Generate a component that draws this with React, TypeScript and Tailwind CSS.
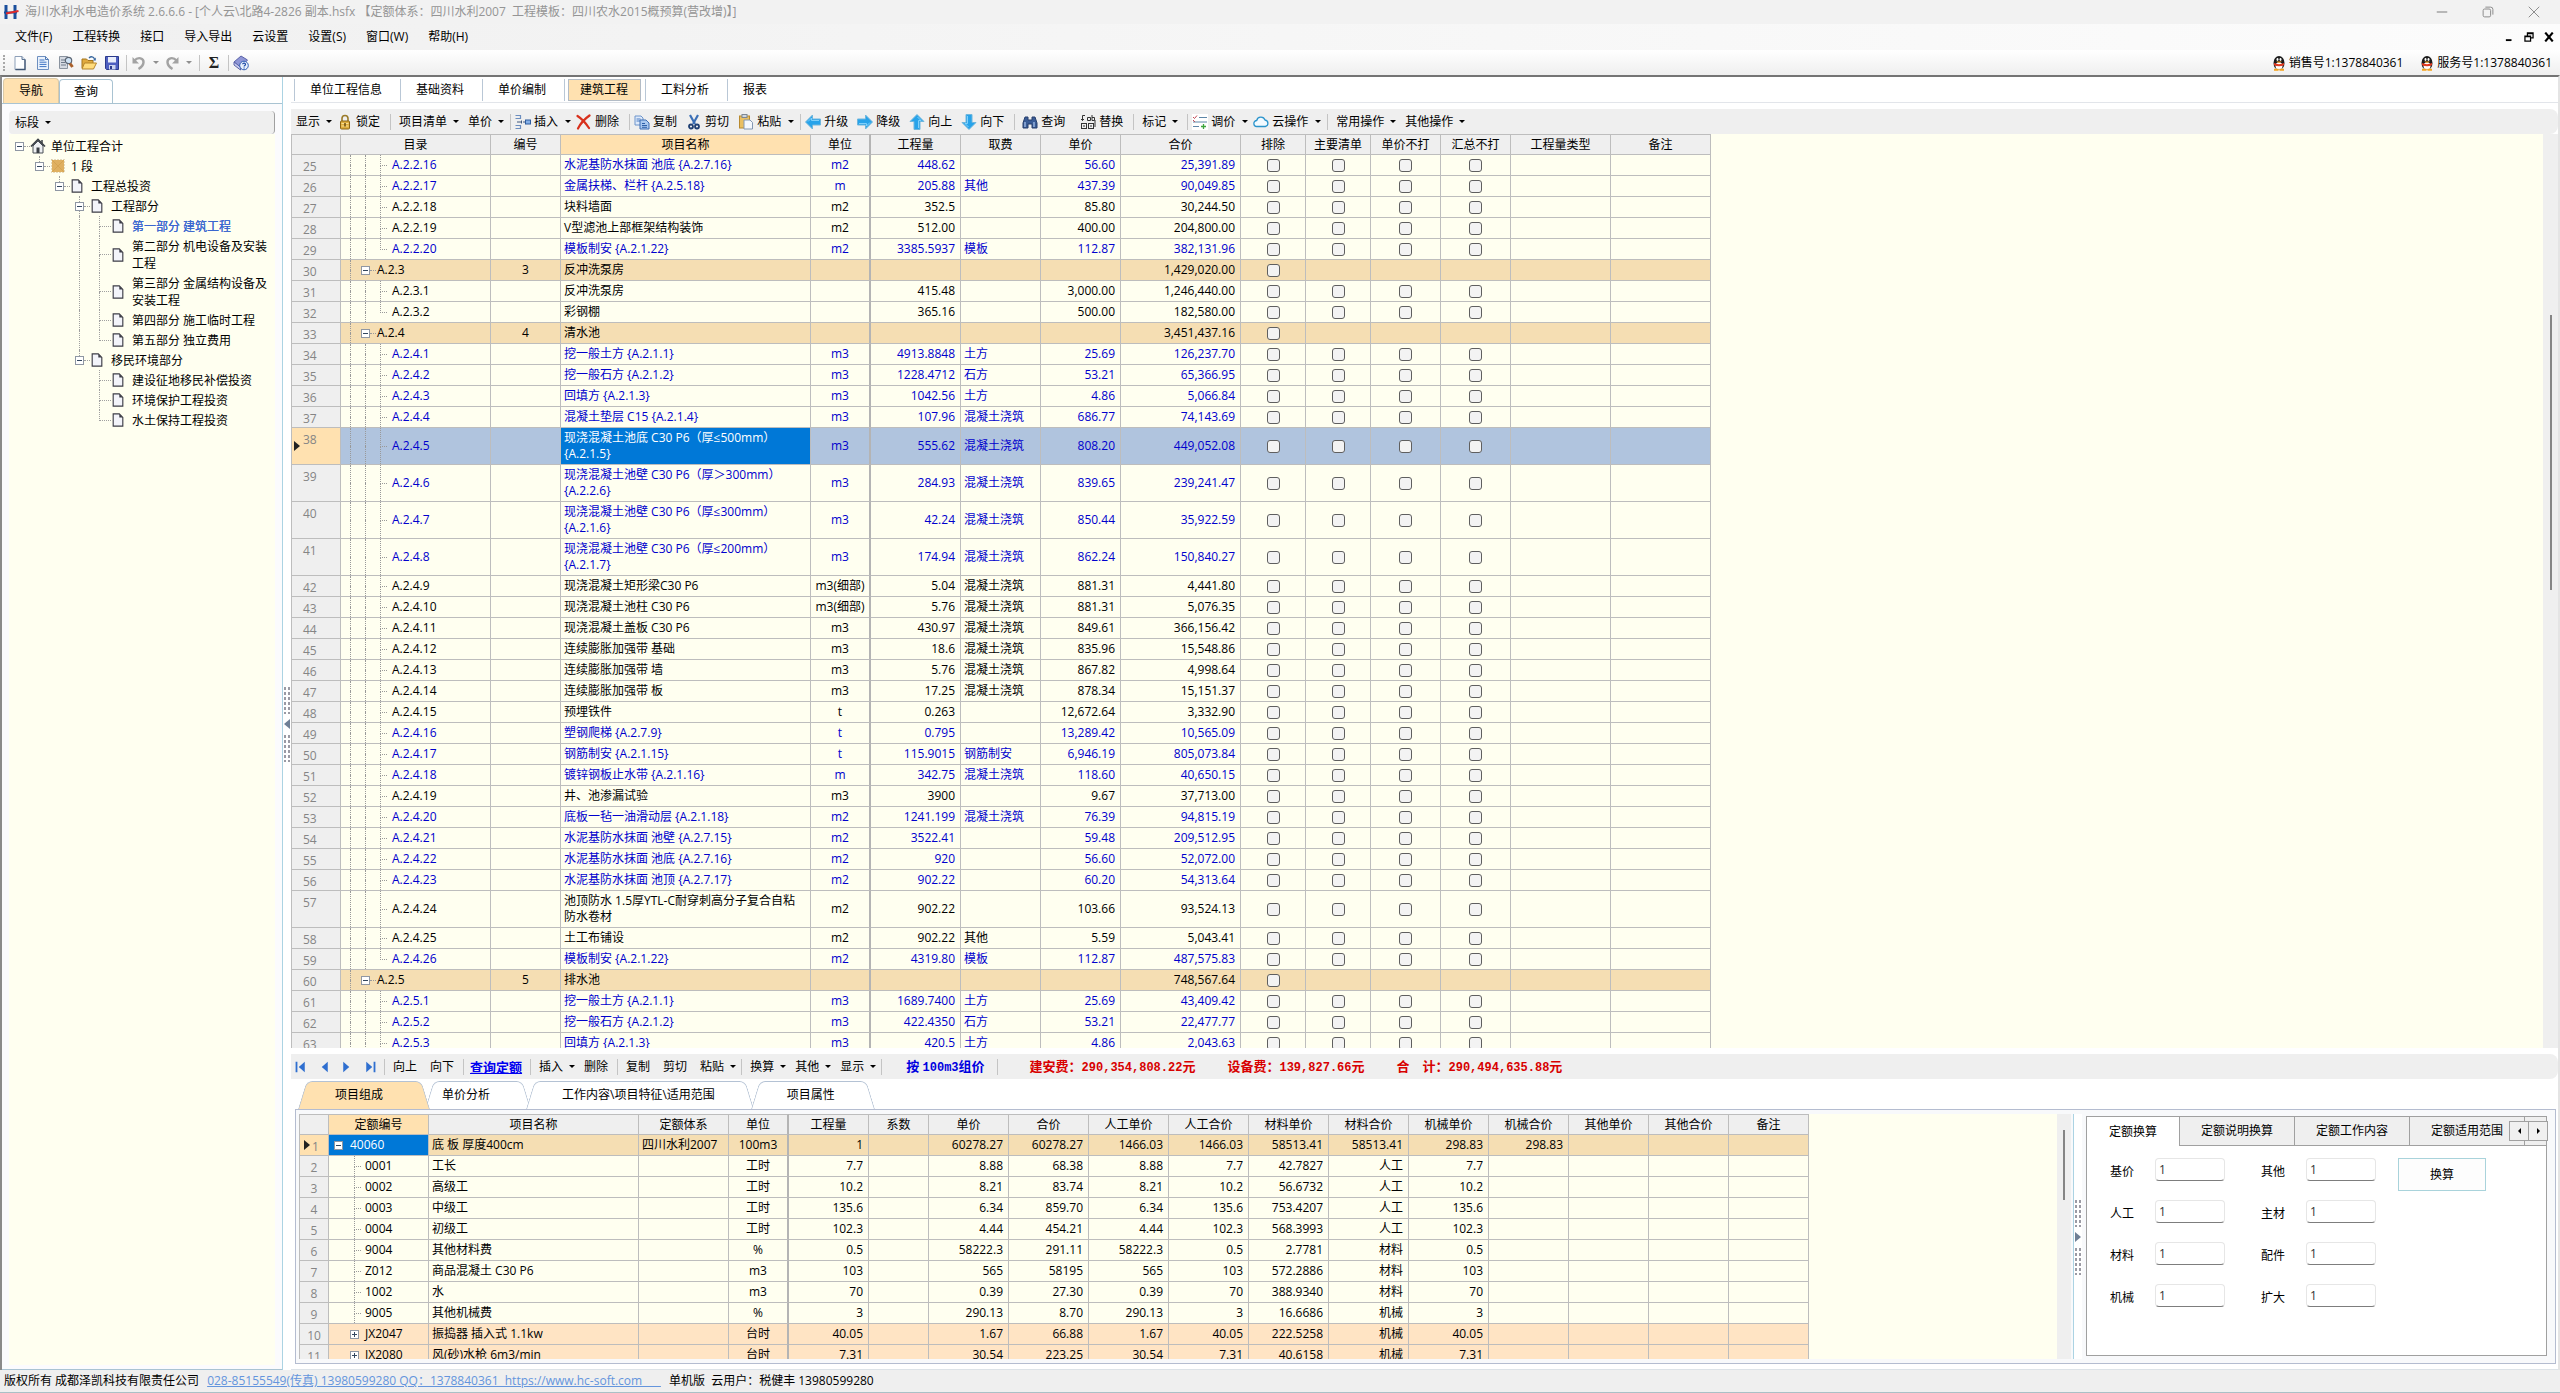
import React from "react";

const FONT = "font-['Open_Sans','Noto_Sans_CJK_SC',sans-serif]";

/* ---------- icons ---------- */

const Svg = ({ children, size = "size-4" }: { children: React.ReactNode; size?: string }) => (
  <svg viewBox="0 0 16 16" className={`${size} shrink-0`} fill="none" aria-hidden="true">
    {children}
  </svg>
);

const NewDoc = () => (
  <Svg>
    <path d="M3 1.5h7l3 3v10H3z" fill="#fdfeff" stroke="#8d9fb8" />
    <path d="M13 4.5v10H3.5" stroke="#3f5573" strokeWidth="1.3" />
    <path d="M10 1.5v3h3" fill="#dbe6f3" stroke="#5d7391" />
  </Svg>
);
const TextDoc = () => (
  <Svg>
    <path d="M2.5 1.5h8l3 3v10h-11z" fill="#eaf2fc" stroke="#6d8fc0" />
    <path d="M10.5 1.5v3h3" stroke="#4f78b3" />
    <path d="M4.5 5h5M4.5 7.2h7M4.5 9.4h7M4.5 11.6h7" stroke="#3f74c4" />
  </Svg>
);
const FindDoc = () => (
  <Svg>
    <path d="M1.5 1.5h8v12h-8z" fill="#d5dae2" stroke="#8a939f" />
    <path d="M3 5h4M3 7.5h4M3 10h5" stroke="#6e7a8a" />
    <circle cx="10.5" cy="5.5" r="3.2" fill="#cfe3f5" stroke="#5a6472" strokeWidth="1.2" />
    <path d="M12 8.5l2.5 3.5" stroke="#a9602b" strokeWidth="3" />
  </Svg>
);
const OpenFolder = () => (
  <Svg>
    <path d="M1 4h4.5l1.5 1.5h5V13H1z" fill="#e0aa3e" stroke="#a4741c" />
    <path d="M3.5 8h12L12.5 14H1z" fill="#ffdc7c" stroke="#b5852b" />
    <path d="M8 3c2-2 4.5-1.5 5.5 1" stroke="#38679f" strokeWidth="1.3" />
    <path d="M14.8 2.5v3h-3z" fill="#38679f" />
  </Svg>
);
const Save = () => (
  <Svg>
    <path d="M1.5 1.5h13v13h-12l-1-1z" fill="#4e5fc0" stroke="#2b3a8c" />
    <path d="M4 2h8v5.5H4z" fill="#e9eefb" />
    <path d="M5 10h6.5v4.5H5z" fill="#cdd5ee" />
    <path d="M6 11h2v3H6z" fill="#2b3a8c" />
  </Svg>
);
const Undo = () => (
  <Svg>
    <path d="M3.5 5.5C7 1.5 13 3 12.5 7.5c-.3 3-2.5 5-5 6.5" stroke="#a3a3a3" strokeWidth="2.4" />
    <path d="M1.5 2v6.5H8z" fill="#a3a3a3" />
  </Svg>
);
const Redo = () => (
  <Svg>
    <path d="M12.5 5.5C9 1.5 3 3 3.5 7.5c.3 3 2.5 5 5 6.5" stroke="#a3a3a3" strokeWidth="2.4" />
    <path d="M14.5 2v6.5H8z" fill="#a3a3a3" />
  </Svg>
);
const HelpBook = () => (
  <Svg>
    <path d="M1 7l7-6 6.5 4-7 7z" fill="#8f96d6" stroke="#5a62a8" />
    <path d="M1 7v3l6.5 5v-3z" fill="#c8ccee" stroke="#5a62a8" />
    <circle cx="11" cy="10.5" r="4.3" fill="#e6effc" stroke="#2f5db5" />
    <path d="M9.6 9.3c.2-1.600 2.900-1.600 2.900.1 0 1-1.400 1.200-1.400 2.200M11.100 12.400v1" stroke="#1f4ba8" strokeWidth="1.2" />
  </Svg>
);
const Lock = () => (
  <Svg>
    <path d="M5 8V4.5a3 3 0 0 1 6 0V8" stroke="#9a7b2a" strokeWidth="1.6" />
    <rect x="3.5" y="7" width="9" height="8" rx="1" fill="#dfae3f" stroke="#8a6414" />
    <path d="M4.5 9.5h7M4.5 12h7" stroke="#f8df94" />
    <path d="M8 9v3.5" stroke="#6b4a0b" strokeWidth="1.5" />
  </Svg>
);
const Insert = () => (
  <Svg>
    <path d="M.5 1.5h5v3h-5M.5 14.5h5v-3h-5" stroke="#6c8ebf" strokeWidth="1.2" />
    <path d="M2 8h4M8 8h2M6.5 6.5v3" stroke="#41597d" />
    <rect x="10.5" y="6" width="5" height="4" fill="#86b0e8" stroke="#2e5c9e" />
  </Svg>
);
const Cross = () => (
  <Svg>
    <path d="M1.5 2c4 2.5 8.5 7.5 11.5 12M13.5 1.5C8.5 5 4.5 9.5 2 14.5" stroke="#d8301c" strokeWidth="2.2" strokeLinecap="round" />
  </Svg>
);
const Copy = () => (
  <Svg>
    <path d="M1 2h6l2 2v7H1z" fill="#dfeafa" stroke="#6d94cb" />
    <path d="M2.5 5h4M2.5 7h4" stroke="#4a7dc4" />
    <path d="M6 6h6l3 3v6H6z" fill="#a9c8ef" stroke="#3d6db3" />
    <path d="M8 9.5h3M8 11.5h5M8 13.3h5" stroke="#2e5fa8" />
  </Svg>
);
const Cut = () => (
  <Svg>
    <path d="M4 1l5 9M12 1L7 10" stroke="#3b6fb6" strokeWidth="2.2" />
    <circle cx="5" cy="12.5" r="2" stroke="#1f3f73" strokeWidth="1.8" />
    <circle cx="11" cy="12.5" r="2" stroke="#1f3f73" strokeWidth="1.8" />
  </Svg>
);
const Paste = () => (
  <Svg>
    <rect x="1.5" y="2" width="10" height="12" fill="#e9bf62" stroke="#b98a2f" />
    <rect x="4" y=".5" width="5" height="3" fill="#cfd6df" stroke="#7d8793" />
    <path d="M6 6h6l2.5 2.500V15H6z" fill="#f4f8fd" stroke="#8297b3" />
  </Svg>
);
const Arrow = ({ turn }: { turn: string }) => (
  <svg viewBox="0 0 16 16" className={`size-4 shrink-0 ${turn}`} aria-hidden="true">
    <path d="M.5 8l7-7v4H15.500v6H7.500v4z" fill="#27a3ea" stroke="#6fb6dd" />
    <path d="M3 7.500L6.500 4v2.500H14" stroke="#7fd0fb" fill="none" />
  </svg>
);
const Binoculars = () => (
  <Svg>
    <path d="M3 3h3v3h4V3h3l2 6v5h-5v-4H6v4H1V9z" fill="#3a5c96" stroke="#263f6d" />
    <path d="M3 8v5M12 8v5" stroke="#a5c1ea" strokeWidth="1.3" />
  </Svg>
);
const Replace = () => (
  <Svg>
    <path d="M5 1.5H2.500v5M2.500 6.500L1 5M2.500 6.500L4 5" stroke="#333" />
    <path d="M10.500 6.500v-3h-3v3zM12 1v5.500h2.500v-3H12" stroke="#333" />
    <rect x="1.5" y="9.5" width="5" height="5" stroke="#333" />
    <rect x="8.5" y="9.5" width="5" height="5" stroke="#333" />
    <path d="M3 12h2M10 12h2M15 6v7" stroke="#333" />
  </Svg>
);
const PriceAdjust = () => (
  <Svg>
    <rect width="16" height="16" fill="#fff" />
    <path d="M1 3l1.500 1.500L5 1.500" stroke="#c24a56" />
    <path d="M7 3.500h8M1 8h14M1 12.500h6" stroke="#5d86a8" />
    <path d="M1 6l2 2" stroke="#c24a56" />
    <path d="M9 12.500h5M11.500 10v5" stroke="#3da53d" strokeWidth="1.3" />
  </Svg>
);
const Cloud = () => (
  <Svg>
    <path d="M4 12.500a3 3 0 0 1-.3-6A4.300 4.300 0 0 1 12 6a3.300 3.300 0 0 1 .3 6.500z" fill="#f2faff" stroke="#2b94cc" strokeWidth="1.3" />
  </Svg>
);
const Penguin = () => (
  <Svg>
    <ellipse cx="8" cy="8" rx="5.500" ry="7" fill="#1b1b1b" />
    <ellipse cx="8" cy="11" rx="3.500" ry="3.700" fill="#fff" />
    <ellipse cx="6.500" cy="4.500" rx="1" ry="1.400" fill="#fff" />
    <ellipse cx="9.500" cy="4.500" rx="1" ry="1.400" fill="#fff" />
    <path d="M5 6.500h6L8 8z" fill="#f5a31b" />
    <path d="M3 8c3 1.500 7 1.500 10 0v2.200c-3 1.300-7 1.300-10 0z" fill="#e2391f" />
    <path d="M3 14.800h4.500M8.500 14.800H13" stroke="#f5a31b" strokeWidth="2" />
  </Svg>
);
const House = () => (
  <Svg>
    <path d="M1 8.500L8 1.500l7 7" stroke="#3a3f45" strokeWidth="1.7" />
    <path d="M3 8l5-5 5 5v7H3z" fill="#eef0f3" stroke="#4a5057" />
    <rect x="6.5" y="9.5" width="3" height="5.500" fill="#3a3f45" />
    <path d="M12 2v3" stroke="#3a3f45" strokeWidth="1.5" />
  </Svg>
);
const Segment = () => (
  <Svg>
    <rect x="2" y="2" width="12" height="12" fill="#dfb061" />
    <path d="M2 2l12 12M14 2L2 14" stroke="#cf9c48" strokeWidth=".6" />
    <rect x="1.5" y="1.5" width="13" height="13" stroke="#cbb58b" strokeDasharray="1 2" />
  </Svg>
);
const Page = () => (
  <Svg size="size-3.5">
    <path d="M2.500 1h7l4 4v10h-11z" fill="#f3f4fa" stroke="#3c3c46" strokeWidth="1.3" />
    <path d="M9.500 1l4 4h-4z" fill="#3c3c46" />
  </Svg>
);
const Logo = () => (
  <Svg>
    <path d="M3 1v14M12 1v14" stroke="#1a4f9c" strokeWidth="3" />
    <path d="M1 8.500h13" stroke="#1a4f9c" strokeWidth="2" />
    <path d="M3 9.500L15.500 7" stroke="#e02a2a" strokeWidth="1.8" />
  </Svg>
);
const NavGlyph = ({ dir, bar }: { dir: "l" | "r"; bar?: boolean }) => (
  <Svg size="size-3">
    {dir === "l" ? (
      <>
        {bar && <path d="M2 1v14" stroke="#2f6fd0" strokeWidth="2.4" />}
        <path d="M13 1v14L5 8z" fill="#2f6fd0" />
      </>
    ) : (
      <>
        {bar && <path d="M14 1v14" stroke="#2f6fd0" strokeWidth="2.4" />}
        <path d="M3 1v14l8-7z" fill="#2f6fd0" />
      </>
    )}
  </Svg>
);

const Caret = ({ tone = "border-t-black" }: { tone?: string }) => (
  <span className={`mr-px h-0 w-0 border-x-[3px] border-t-[3px] border-x-transparent ${tone}`} />
);
const Sep = ({ gap = "ml-1" }: { gap?: string }) => <span className={`${gap} h-4 w-px shrink-0 bg-[#c4c4c4]`} />;

function Tool({
  icon,
  label,
  caret,
  className = "",
}: {
  icon?: React.ReactNode;
  label: string;
  caret?: boolean;
  className?: string;
}) {
  return (
    <button className={`flex items-center whitespace-nowrap ${icon ? "gap-[3px] pl-1" : "pl-2"} ${caret ? "pr-0" : "pr-[5px]"} ${className}`}>
      {icon}
      <span>{label}</span>
      {caret && (
        <span className={icon ? "flex pl-1" : "flex pl-1.5"}>
          <Caret />
        </span>
      )}
    </button>
  );
}

const Box = ({ plus }: { plus?: boolean }) => (
  <span className="flex size-[9px] shrink-0 items-center justify-center border border-[#8f97a3] bg-white">
    <svg viewBox="0 0 7 7" className="size-[7px]" aria-hidden="true">
      <path d={plus ? "M1 3.500h5M3.500 1v5" : "M1 3.500h5"} stroke="#33475f" />
    </svg>
  </span>
);

/* ---------- window chrome ---------- */

function TitleBar() {
  return (
    <header className="flex h-6 items-center bg-[#f2f2f2] pl-[3px] text-[#959595]">
      <Logo />
      <h1 className="ml-1.5 flex-1 whitespace-pre">
        {"海川水利水电造价系统 2.6.6.6 - [个人云\\北路4-2826 副本.hsfx 【定额体系：四川水利2007  工程模板：四川农水2015概预算(营改增)】]"}
      </h1>
      <div className="flex items-center gap-[34px] pr-5">
        <button aria-label="最小化"><Svg size="size-3"><path d="M1 8h14" stroke="#8a8a8a" strokeWidth="1.5" /></Svg></button>
        <button aria-label="还原"><Svg size="size-3"><rect x="1.5" y="4" width="10" height="10.5" rx="2" stroke="#8a8a8a" strokeWidth="1.3" /><path d="M4.500 1.500h7a3 3 0 0 1 3 3v7" stroke="#8a8a8a" strokeWidth="1.3" /></Svg></button>
        <button aria-label="关闭"><Svg size="size-3"><path d="M1 1l14 14M15 1L1 15" stroke="#8a8a8a" strokeWidth="1.3" /></Svg></button>
      </div>
    </header>
  );
}

function MenuBar() {
  const items = ["文件(F)", "工程转换", "接口", "导入导出", "云设置", "设置(S)", "窗口(W)", "帮助(H)"];
  return (
    <nav className="flex h-[26px] items-center gap-5 bg-linear-to-r from-[#f0f0f0] to-[#fcfcfc] pl-[15px]">
      {items.map((t) => <button key={t} className="whitespace-nowrap">{t}</button>)}
      <div className="ml-auto flex items-center gap-[10px] pr-1.5">
        <button aria-label="最小化文档"><Svg size="size-2.5"><path d="M3 13h9" stroke="#000" strokeWidth="3" /></Svg></button>
        <button aria-label="还原文档"><Svg size="size-2.5"><path d="M1.500 6.500h9v8h-9zM1.500 7.500h9M5.500 6V1.500h9v8H11M5.500 2.500h9" stroke="#000" strokeWidth="2" /></Svg></button>
        <button aria-label="关闭文档"><Svg size="size-2.5"><path d="M2 1l12 14M14 1L2 15" stroke="#000" strokeWidth="3.5" /></Svg></button>
      </div>
    </nav>
  );
}

function QuickBar() {
  return (
    <div className="flex h-[25px] items-center bg-linear-to-b from-white to-[#efefef] pl-[3px]">
      <span className="h-4 border-l-2 border-dotted border-[#a8a8a8]" />
      <div className="ml-[7px] flex items-center gap-[7px]">
        <button aria-label="新建"><NewDoc /></button>
        <button aria-label="文档"><TextDoc /></button>
        <button aria-label="查找"><FindDoc /></button>
        <button aria-label="打开"><OpenFolder /></button>
        <button aria-label="保存"><Save /></button>
      </div>
      <Sep gap="ml-1.5" />
      <button aria-label="撤销" className="ml-1 flex items-center gap-[6px]"><Undo /><Caret tone="border-t-[#8f8f8f]" /></button>
      <button aria-label="重做" className="ml-1 flex items-center gap-[6px]"><Redo /><Caret tone="border-t-[#8f8f8f]" /></button>
      <Sep gap="ml-1.5" />
      <button aria-label="合计" className="mx-1 w-5 font-['Liberation_Serif',serif] text-base leading-5 font-bold text-[#222]">Σ</button>
      <Sep gap="ml-0" />
      <button aria-label="帮助" className="ml-1"><HelpBook /></button>
      <div className="ml-auto flex items-center gap-4 pr-2">
        {["销售号1:1378840361", "服务号1:1378840361"].map((t) => (
          <button key={t} className="flex items-center gap-0.5"><Penguin />{t}</button>
        ))}
      </div>
    </div>
  );
}

/* ---------- navigation tree ---------- */

type Node = { level: number; text: string[]; open?: boolean; last?: boolean; on?: boolean };
const nodes: Node[] = [
  { level: 0, text: ["单位工程合计"], open: true, last: true },
  { level: 1, text: ["1 段"], open: true, last: true },
  { level: 2, text: ["工程总投资"], open: true, last: true },
  { level: 3, text: ["工程部分"], open: true },
  { level: 4, text: ["第一部分 建筑工程"], on: true },
  { level: 4, text: ["第二部分 机电设备及安装", "工程"] },
  { level: 4, text: ["第三部分 金属结构设备及", "安装工程"] },
  { level: 4, text: ["第四部分 施工临时工程"] },
  { level: 4, text: ["第五部分 独立费用"], last: true },
  { level: 3, text: ["移民环境部分"], open: true, last: true },
  { level: 4, text: ["建设征地移民补偿投资"] },
  { level: 4, text: ["环境保护工程投资"] },
  { level: 4, text: ["水土保持工程投资"], last: true },
];

const dotsV = "border-l border-dotted border-[#a0a0a0]";

function Sidebar() {
  return (
    <aside className="flex w-[280px] shrink-0 flex-col">
      <div className="flex h-[27px] items-end border-b border-[#a9c3d2] pl-px">
        <button className="h-[25px] w-14 rounded-t border border-b-0 border-[#d9c9a8] bg-[#ffe1b0]">导航</button>
        <button className="h-6 w-[54px] rounded-t border border-b-0 border-[#a9c3d2] bg-white">查询</button>
      </div>
      <div className="flex flex-1 flex-col border-b border-[#a9c3d2] bg-[#fbfbfd] px-[7px] pt-[7px] pb-1">
        <div className="flex h-[23px] items-center rounded-sm border-r border-[#a0a0a0] bg-[#efefef]">
          <button className="flex items-center gap-1.5 pl-1.5">标段 <Caret /></button>
        </div>
        <ul className="flex-1 bg-[#fffff0] pt-[2px] pl-1.5">
          {nodes.map((n, i) => (
            <li key={i} className={`flex items-stretch ${n.text.length > 1 ? "h-[37px]" : "h-5"}`}>
              {Array.from({ length: n.level }).map((_, k) => (
                <span key={k} className="flex w-5 shrink-0 pl-1">
                  <span className={k === 3 && i < 9 ? dotsV : ""} />
                </span>
              ))}
              {n.open ? (
                <span className="flex w-[15px] shrink-0 items-center">
                  <span className="flex h-full w-[9px] flex-col">
                    <span className={`ml-1 flex-1 ${n.level > 0 ? dotsV : ""}`} />
                    <Box />
                    <span className={`ml-1 flex-1 ${n.last ? "" : dotsV}`} />
                  </span>
                  <span className="flex-1 border-b border-dotted border-[#a0a0a0]" />
                </span>
              ) : (
                <span className="flex w-4 shrink-0 flex-col pl-1">
                  <span className={`flex-1 border-b ${dotsV}`} />
                  <span className={`flex-1 ${n.last ? "" : dotsV}`} />
                </span>
              )}
              <span className="flex w-[21px] shrink-0 items-center">
                {n.level === 0 ? <House /> : n.level === 1 ? <Segment /> : <Page />}
              </span>
              <span className={`self-center leading-[17px] whitespace-nowrap ${n.on ? "text-[#3a66cf] [text-shadow:0_0_0.5px_#3a66cf]" : ""}`}>
                {n.text.map((t) => <span key={t} className="block">{t}</span>)}
              </span>
            </li>
          ))}
        </ul>
      </div>
    </aside>
  );
}

const Grip = () => <span className="h-7 w-2 bg-[radial-gradient(#9a9aa4_1px,transparent_1px)] bg-size-[4px_5px]" />;

function Splitter({ dir }: { dir: "l" | "r" }) {
  return (
    <div className="flex w-[9px] shrink-0 flex-col items-center justify-center gap-[5px] border-l border-[#abd3e3] bg-white">
      <Grip />
      <span className={`h-0 w-0 border-y-[5px] border-y-transparent ${dir === "l" ? "border-r-[6px] border-r-[#6f7f95]" : "border-l-[6px] border-l-[#6f7f95]"}`} />
      <Grip />
    </div>
  );
}

/* ---------- main grid ---------- */

// row number, code, name, unit, quantity, fee class, price, total, linked, sequence
type Row = [number, string, string, string, string, string, string, string, number, string?];
const rows: Row[] = [
  [25, "A.2.2.16", "水泥基防水抹面 池底 {A.2.7.16}", "m2", "448.62", "", "56.60", "25,391.89", 1],
  [26, "A.2.2.17", "金属扶梯、栏杆 {A.2.5.18}", "m", "205.88", "其他", "437.39", "90,049.85", 1],
  [27, "A.2.2.18", "块料墙面", "m2", "352.5", "", "85.80", "30,244.50", 0],
  [28, "A.2.2.19", "V型滤池上部框架结构装饰", "m2", "512.00", "", "400.00", "204,800.00", 0],
  [29, "A.2.2.20", "模板制安 {A.2.1.22}", "m2", "3385.5937", "模板", "112.87", "382,131.96", 1],
  [30, "A.2.3", "反冲洗泵房", "", "", "", "", "1,429,020.00", 0, "3"],
  [31, "A.2.3.1", "反冲洗泵房", "", "415.48", "", "3,000.00", "1,246,440.00", 0],
  [32, "A.2.3.2", "彩钢棚", "", "365.16", "", "500.00", "182,580.00", 0],
  [33, "A.2.4", "清水池", "", "", "", "", "3,451,437.16", 0, "4"],
  [34, "A.2.4.1", "挖一般土方 {A.2.1.1}", "m3", "4913.8848", "土方", "25.69", "126,237.70", 1],
  [35, "A.2.4.2", "挖一般石方 {A.2.1.2}", "m3", "1228.4712", "石方", "53.21", "65,366.95", 1],
  [36, "A.2.4.3", "回填方 {A.2.1.3}", "m3", "1042.56", "土方", "4.86", "5,066.84", 1],
  [37, "A.2.4.4", "混凝土垫层 C15 {A.2.1.4}", "m3", "107.96", "混凝土浇筑", "686.77", "74,143.69", 1],
  [38, "A.2.4.5", "现浇混凝土池底 C30 P6（厚≤500mm）\n{A.2.1.5}", "m3", "555.62", "混凝土浇筑", "808.20", "449,052.08", 1],
  [39, "A.2.4.6", "现浇混凝土池壁 C30 P6（厚＞300mm）\n{A.2.2.6}", "m3", "284.93", "混凝土浇筑", "839.65", "239,241.47", 1],
  [40, "A.2.4.7", "现浇混凝土池壁 C30 P6（厚≤300mm）\n{A.2.1.6}", "m3", "42.24", "混凝土浇筑", "850.44", "35,922.59", 1],
  [41, "A.2.4.8", "现浇混凝土池壁 C30 P6（厚≤200mm）\n{A.2.1.7}", "m3", "174.94", "混凝土浇筑", "862.24", "150,840.27", 1],
  [42, "A.2.4.9", "现浇混凝土矩形梁C30 P6", "m3(细部)", "5.04", "混凝土浇筑", "881.31", "4,441.80", 0],
  [43, "A.2.4.10", "现浇混凝土池柱 C30 P6", "m3(细部)", "5.76", "混凝土浇筑", "881.31", "5,076.35", 0],
  [44, "A.2.4.11", "现浇混凝土盖板 C30 P6", "m3", "430.97", "混凝土浇筑", "849.61", "366,156.42", 0],
  [45, "A.2.4.12", "连续膨胀加强带 基础", "m3", "18.6", "混凝土浇筑", "835.96", "15,548.86", 0],
  [46, "A.2.4.13", "连续膨胀加强带 墙", "m3", "5.76", "混凝土浇筑", "867.82", "4,998.64", 0],
  [47, "A.2.4.14", "连续膨胀加强带 板", "m3", "17.25", "混凝土浇筑", "878.34", "15,151.37", 0],
  [48, "A.2.4.15", "预埋铁件", "t", "0.263", "", "12,672.64", "3,332.90", 0],
  [49, "A.2.4.16", "塑钢爬梯 {A.2.7.9}", "t", "0.795", "", "13,289.42", "10,565.09", 1],
  [50, "A.2.4.17", "钢筋制安 {A.2.1.15}", "t", "115.9015", "钢筋制安", "6,946.19", "805,073.84", 1],
  [51, "A.2.4.18", "镀锌钢板止水带 {A.2.1.16}", "m", "342.75", "混凝土浇筑", "118.60", "40,650.15", 1],
  [52, "A.2.4.19", "井、池渗漏试验", "m3", "3900", "", "9.67", "37,713.00", 0],
  [53, "A.2.4.20", "底板一毡一油滑动层 {A.2.1.18}", "m2", "1241.199", "混凝土浇筑", "76.39", "94,815.19", 1],
  [54, "A.2.4.21", "水泥基防水抹面 池壁 {A.2.7.15}", "m2", "3522.41", "", "59.48", "209,512.95", 1],
  [55, "A.2.4.22", "水泥基防水抹面 池底 {A.2.7.16}", "m2", "920", "", "56.60", "52,072.00", 1],
  [56, "A.2.4.23", "水泥基防水抹面 池顶 {A.2.7.17}", "m2", "902.22", "", "60.20", "54,313.64", 1],
  [57, "A.2.4.24", "池顶防水 1.5厚YTL-C耐穿刺高分子复合自粘\n防水卷材", "m2", "902.22", "", "103.66", "93,524.13", 0],
  [58, "A.2.4.25", "土工布铺设", "m2", "902.22", "其他", "5.59", "5,043.41", 0],
  [59, "A.2.4.26", "模板制安 {A.2.1.22}", "m2", "4319.80", "模板", "112.87", "487,575.83", 1],
  [60, "A.2.5", "排水池", "", "", "", "", "748,567.64", 0, "5"],
  [61, "A.2.5.1", "挖一般土方 {A.2.1.1}", "m3", "1689.7400", "土方", "25.69", "43,409.42", 1],
  [62, "A.2.5.2", "挖一般石方 {A.2.1.2}", "m3", "422.4350", "石方", "53.21", "22,477.77", 1],
  [63, "A.2.5.3", "回填方 {A.2.1.3}", "m3", "420.5", "土方", "4.86", "2,043.63", 1],
];

const cell = "border-r border-b border-[#bdbdbd] p-0";
const thick = "border-r-2 border-r-[#b4b4b4]";

function Check({ label }: { label: string }) {
  return (
    <input type="checkbox" aria-label={label} className="mx-auto block size-[13px] appearance-none rounded-[3px] border border-[#5f5f5f] bg-[#f3f3f3]" />
  );
}

const Guide = ({ half, tick }: { half?: boolean; tick?: boolean }) => (
  <span className="flex h-full w-[15px] shrink-0 flex-col">
    <span className={`flex-1 border-l border-dotted border-[#999] ${tick ? "mr-2 border-b" : ""}`} />
    <span className={`flex-1 ${half ? "" : "border-l border-dotted border-[#999]"}`} />
  </span>
);

const Pointer = () => (
  <span className="h-0 w-0 border-y-[5px] border-l-[6px] border-y-transparent border-l-[#222]" />
);

function MainGrid() {
  const heads = ["", "目录", "编号", "项目名称", "单位", "工程量", "取费", "单价", "合价", "排除", "主要清单", "单价不打", "汇总不打", "工程量类型", "备注"];
  return (
    <table className="w-[1420px] table-fixed border-separate border-spacing-0">
      <colgroup>
        <col className="w-[50px]" /><col className="w-[150px]" /><col className="w-[70px]" /><col className="w-[250px]" /><col className="w-[60px]" />
        <col className="w-[90px]" /><col className="w-20" /><col className="w-20" /><col className="w-[120px]" /><col className="w-[65px]" />
        <col className="w-[65px]" /><col className="w-[70px]" /><col className="w-[70px]" /><col className="w-[100px]" /><col className="w-[100px]" />
      </colgroup>
      <thead>
        <tr className="h-[21px]">
          {heads.map((h, i) => (
            <th key={i} className={`${cell} border-t font-normal ${i === 0 ? "border-l" : ""} ${i === 3 ? "bg-[#ffe1b0]" : "bg-[#efefef]"} ${i === 4 ? thick : ""}`}>{h}</th>
          ))}
        </tr>
      </thead>
      <tbody>
        {rows.map((r, i) => {
          const [no, code, name, unit, qty, fee, price, total, linked, seq] = r;
          const group = seq !== undefined;
          const on = no === 38;
          const lines = name.split("\n");
          const tall = lines.length > 1;
          const lastChild = i + 1 < rows.length && rows[i + 1][9] !== undefined;
          const bg = group ? "bg-[#f5deb3]" : on ? "bg-[#b0c4de]" : "bg-[#fffff0]";
          return (
            <tr key={no} className={`${tall ? "h-[37px]" : "h-[21px]"} ${bg} ${linked ? "text-[#0000cd]" : ""}`}>
              <td className={`${cell} border-l align-top text-[#858585] ${on ? "bg-[#ffe1b0]" : "bg-[#efefef]"}`}>
                <div className={`flex ${tall ? "h-9" : "h-5"}`}>
                  <span className="flex w-[11px] items-center pl-0.5">{on && <Pointer />}</span>
                  <span className="pt-1 leading-4">{no}</span>
                </div>
              </td>
              <td className={cell}>
                <div className={`flex items-center pl-[9px] ${tall ? "h-9" : "h-5"}`}>
                  <Guide />
                  {group ? (
                    <span className="-ml-1 flex items-center">
                      <Box /><span className="mr-px w-1.5 border-b border-dotted border-[#999]" />
                    </span>
                  ) : (
                    <>
                      <Guide />
                      <Guide tick half={lastChild} />
                    </>
                  )}
                  <span className={group ? "" : "-ml-[3px]"}>{code}</span>
                </div>
              </td>
              <td className={`${cell} text-center`}>{seq}</td>
              <td className={`${cell} pl-[3px] leading-4 whitespace-nowrap ${on ? "bg-[#0078d7] text-white" : ""}`}>
                {lines.map((l) => <span key={l} className="block">{l}</span>)}
              </td>
              <td className={`${cell} ${thick} text-center`}>{unit}</td>
              <td className={`${cell} pr-[5px] text-right`}>{qty}</td>
              <td className={`${cell} pl-[3px] whitespace-nowrap`}>{fee}</td>
              <td className={`${cell} pr-[5px] text-right`}>{price}</td>
              <td className={`${cell} pr-[5px] text-right`}>{total}</td>
              {["排除", "主要清单", "单价不打", "汇总不打"].map((h, k) => (
                <td key={h} className={cell}>{(!group || k === 0) && <Check label={`${code} ${h}`} />}</td>
              ))}
              <td className={cell} />
              <td className={cell} />
            </tr>
          );
        })}
      </tbody>
    </table>
  );
}

function MainTabs() {
  const tabs = ["单位工程信息", "基础资料", "单价编制", "建筑工程", "工料分析", "报表"];
  return (
    <div className="flex h-[26px] items-center border-b border-[#e2e5ea] pl-[3px]">
      {tabs.map((t) =>
        t === "建筑工程" ? (
          <div key={t} className="flex h-[22px] items-center border-l border-[#b9c7d6] pr-1 pl-[3px]">
            <button className="h-[22px] border border-[#b3bcc6] bg-[#ffe1b0] pr-3 pl-[11px]">{t}</button>
          </div>
        ) : (
          <button key={t} className="h-[22px] border-l border-[#b9c7d6] pr-[18px] pl-[15px]">{t}</button>
        ),
      )}
    </div>
  );
}

function MainToolbar() {
  const gap = "ml-[5px]";
  return (
    <div className="flex h-[25px] items-center rounded-r-lg bg-[#efefef] pl-px">
      <Tool label="显示" caret className="-ml-1" />
      <Tool icon={<Lock />} label="锁定" />
      <Sep gap={gap} />
      <Tool label="项目清单" caret />
      <Tool label="单价" caret />
      <Sep gap={gap} />
      <Tool icon={<Insert />} label="插入" caret />
      <Tool icon={<Cross />} label="删除" />
      <Sep gap={gap} />
      <Tool icon={<Copy />} label="复制" />
      <Tool icon={<Cut />} label="剪切" />
      <Tool icon={<Paste />} label="粘贴" caret />
      <Sep gap={gap} />
      <Tool icon={<Arrow turn="rotate-0" />} label="升级" />
      <Tool icon={<Arrow turn="rotate-180" />} label="降级" />
      <Tool icon={<Arrow turn="rotate-90" />} label="向上" />
      <Tool icon={<Arrow turn="-rotate-90" />} label="向下" />
      <Sep gap={gap} />
      <Tool icon={<Binoculars />} label="查询" className="mr-1.5 ml-[3px]" />
      <Tool icon={<Replace />} label="替换" />
      <Sep gap={gap} />
      <Tool label="标记" caret />
      <Sep gap="ml-2" />
      <Tool icon={<PriceAdjust />} label="调价" caret />
      <Tool icon={<Cloud />} label="云操作" caret />
      <Sep gap={gap} />
      <Tool label="常用操作" caret />
      <Tool label="其他操作" caret />
    </div>
  );
}

/* ---------- detail area ---------- */

function DetailToolbar() {
  const fee = "font-bold text-[#d80000]";
  const num = "font-['Liberation_Mono',monospace] text-xs";
  return (
    <div className="flex h-[25px] shrink-0 items-center rounded-r-lg bg-[#efefef] pl-1">
      <div className="flex items-center gap-[11px]">
        <button aria-label="首条"><NavGlyph dir="l" bar /></button>
        <button aria-label="上一条"><NavGlyph dir="l" /></button>
        <button aria-label="下一条"><NavGlyph dir="r" /></button>
        <button aria-label="末条"><NavGlyph dir="r" bar /></button>
      </div>
      <Sep gap="ml-2" />
      <Tool label="向上" />
      <Tool label="向下" />
      <Sep />
      <button className="mr-1 ml-1.5 text-[13px] font-bold text-[#0000f0] underline">查询定额</button>
      <Sep />
      <Tool label="插入" caret />
      <Tool label="删除" />
      <Sep />
      <Tool label="复制" />
      <Tool label="剪切" />
      <Tool label="粘贴" caret />
      <Sep />
      <Tool label="换算" caret />
      <Tool label="其他" caret />
      <Tool label="显示" caret />
      <Sep />
      <span className="mr-2 ml-6 text-[13px] font-bold whitespace-pre text-[#0000e0]">按 <span className={num}>100m3</span>组价</span>
      <Sep />
      <div className="ml-8 flex gap-8 text-[13px] whitespace-pre">
        <span className={fee}>建安费：<span className={num}>290,354,808.22</span>元</span>
        <span className={fee}>设备费：<span className={num}>139,827.66</span>元</span>
        <span className={fee}>合　计：<span className={num}>290,494,635.88</span>元</span>
      </div>
    </div>
  );
}

function DetailTabs() {
  const shape =
    "relative h-7 before:absolute before:inset-y-0 before:left-0 before:w-1/2 before:origin-bottom before:skew-x-[-17deg] before:rounded-tl-md before:border-t before:border-l before:border-[#b4c2d4] " +
    "after:absolute after:inset-y-0 after:right-0 after:w-1/2 after:origin-bottom after:skew-x-[17deg] after:rounded-tr-md after:border-t after:border-r after:border-[#b4c2d4]";
  return (
    <div className="flex h-[30px] shrink-0 items-end pl-[7px]">
      <button className={`${shape} z-10 pr-[46px] pl-[37px] before:bg-[#ffe1b0] after:bg-[#ffe1b0]`}><span className="relative z-10">项目组成</span></button>
      <button className={`${shape} -ml-1 pr-10 pl-[17px] before:bg-white after:bg-white`}><span className="relative z-10">单价分析</span></button>
      <button className={`${shape} -ml-1 pr-10 pl-9 before:bg-white after:bg-white`}><span className="relative z-10">工作内容\项目特征\适用范围</span></button>
      <button className={`${shape} -ml-1 pr-10 pl-9 before:bg-white after:bg-white`}><span className="relative z-10">项目属性</span></button>
    </div>
  );
}

const detail: string[][] = [
  ["40060", "底 板 厚度400cm", "四川水利2007", "100m3", "1", "60278.27", "60278.27", "1466.03", "1466.03", "58513.41", "58513.41", "298.83", "298.83"],
  ["0001", "工长", "", "工时", "7.7", "8.88", "68.38", "8.88", "7.7", "42.7827", "人工", "7.7", ""],
  ["0002", "高级工", "", "工时", "10.2", "8.21", "83.74", "8.21", "10.2", "56.6732", "人工", "10.2", ""],
  ["0003", "中级工", "", "工时", "135.6", "6.34", "859.70", "6.34", "135.6", "753.4207", "人工", "135.6", ""],
  ["0004", "初级工", "", "工时", "102.3", "4.44", "454.21", "4.44", "102.3", "568.3993", "人工", "102.3", ""],
  ["9004", "其他材料费", "", "%", "0.5", "58222.3", "291.11", "58222.3", "0.5", "2.7781", "材料", "0.5", ""],
  ["Z012", "商品混凝土 C30 P6", "", "m3", "103", "565", "58195", "565", "103", "572.2886", "材料", "103", ""],
  ["1002", "水", "", "m3", "70", "0.39", "27.30", "0.39", "70", "388.9340", "材料", "70", ""],
  ["9005", "其他机械费", "", "%", "3", "290.13", "8.70", "290.13", "3", "16.6686", "机械", "3", ""],
  ["JX2047", "振捣器 插入式 1.1kw", "", "台时", "40.05", "1.67", "66.88", "1.67", "40.05", "222.5258", "机械", "40.05", ""],
  ["JX2080", "风(砂)水枪 6m3/min", "", "台时", "7.31", "30.54", "223.25", "30.54", "7.31", "40.6158", "机械", "7.31", ""],
];

function DetailGrid() {
  const heads = ["", "定额编号", "项目名称", "定额体系", "单位", "工程量", "系数", "单价", "合价", "人工单价", "人工合价", "材料单价", "材料合价", "机械单价", "机械合价", "其他单价", "其他合价", "备注"];
  return (
    <table className="w-[1510px] table-fixed border-separate border-spacing-0">
      <colgroup>
        <col className="w-[30px]" /><col className="w-[100px]" /><col className="w-[210px]" /><col className="w-[90px]" /><col className="w-[60px]" />
        <col className="w-20" /><col className="w-[60px]" />
        {heads.slice(7).map((h) => <col key={h} className="w-20" />)}
      </colgroup>
      <thead>
        <tr className="h-[21px]">
          {heads.map((h, i) => (
            <th key={i} className={`${cell} border-t font-normal ${i === 0 ? "border-l" : ""} ${i === 1 ? "bg-[#ffe1b0]" : "bg-[#efefef]"} ${i === 4 ? thick : ""}`}>{h}</th>
          ))}
        </tr>
      </thead>
      <tbody>
        {detail.map((d, i) => {
          const bg = i === 0 ? "bg-[#f5deb3]" : i > 8 ? "bg-[#ffe4c4]" : "bg-[#fffff0]";
          return (
            <tr key={d[0]} className={`h-[21px] ${bg}`}>
              <td className={`${cell} border-l align-top text-[#858585] ${i === 0 ? "bg-[#ffe1b0]" : "bg-[#efefef]"}`}>
                <div className={`flex h-5 ${i === 0 ? "gap-0.5 pl-1" : "justify-center"}`}>
                  {i === 0 && <span className="flex items-center"><Pointer /></span>}
                  <span className="pt-1 leading-4">{i + 1}</span>
                </div>
              </td>
              <td className={`${cell} ${i === 0 ? "bg-[#0078d7] text-white" : ""}`}>
                {i === 0 ? (
                  <div className="flex h-5 items-center gap-[7px] pl-[5px]"><Box /><span>{d[0]}</span></div>
                ) : (
                  <div className="flex h-5 items-center pl-[25px]">
                    {i > 8 ? <span className="-ml-1 w-[15px]"><Box plus /></span> : <span className="flex h-full w-[11px]"><Guide tick /></span>}
                    <span>{d[0]}</span>
                  </div>
                )}
              </td>
              <td className={`${cell} pl-[3px] whitespace-nowrap`}>{d[1]}</td>
              <td className={`${cell} pl-[3px] whitespace-nowrap`}>{d[2]}</td>
              <td className={`${cell} ${thick} text-center`}>{d[3]}</td>
              <td className={`${cell} pr-[5px] text-right`}>{d[4]}</td>
              <td className={cell} />
              {d.slice(5).map((v, k) => <td key={k} className={`${cell} pr-[5px] text-right`}>{v}</td>)}
              <td className={cell} />
              <td className={cell} />
              <td className={cell} />
            </tr>
          );
        })}
      </tbody>
    </table>
  );
}

function ConvertPanel() {
  const tab = "h-[29px] shrink-0 border-r border-b border-[#a0a0a0] bg-[#efefef] px-[21px] whitespace-nowrap";
  const fields = ["基价", "其他", "人工", "主材", "材料", "配件", "机械", "扩大"];
  return (
    <section className="mt-0.5 mb-[3px] ml-1 flex w-[461px] shrink-0 flex-col border border-[#a0a0a0] bg-white">
      <div className="relative flex">
        <button className="h-[29px] w-[93px] shrink-0 border-r border-[#a0a0a0] bg-white">定额换算</button>
        <button className={tab}>定额说明换算</button>
        <button className={tab}>定额工作内容</button>
        <button className={tab}>定额适用范围</button>
        <span className="flex-1 border-b border-[#a0a0a0] bg-[#efefef]" />
        <div className="absolute top-1 -right-0.5 flex">
          <button aria-label="向左滚动" className="flex h-5 w-5 items-center justify-center border border-[#a0a0a0] bg-[#f0f0f0]">
            <span className="h-0 w-0 border-y-[3px] border-r-[3px] border-y-transparent border-r-black" />
          </button>
          <button aria-label="向右滚动" className="-ml-px flex h-5 w-5 items-center justify-center border border-[#a0a0a0] bg-[#f0f0f0]">
            <span className="h-0 w-0 border-y-[3px] border-l-[3px] border-y-transparent border-l-black" />
          </button>
        </div>
      </div>
      <form className="flex items-start gap-[22px] pt-3 pl-[23px]">
        <div className="grid grid-cols-2 gap-x-9 gap-y-[19px]">
          {fields.map((f) => (
            <label key={f} className="flex h-[23px] items-center">
              <span className="w-[45px] pt-1">{f}</span>
              <input defaultValue="1" className="h-[23px] w-[70px] rounded-sm border border-[#e6e6e6] border-b-[#7d7d7d] bg-white px-[3px] text-[#333]" />
            </label>
          ))}
        </div>
        <button type="button" className="h-[33px] w-[88px] border border-[#a9d3db] bg-[#fdfdfd]">换算</button>
      </form>
    </section>
  );
}

function StatusBar() {
  return (
    <footer className="flex h-[23px] items-center border-b border-[#a9c0c6] bg-[#efefef] pl-1 whitespace-pre">
      <span>版权所有 成都泽凯科技有限责任公司</span>
      <a href="https://www.hc-soft.com" className="ml-2 text-[#6495dd] underline">{"028-85155549(传真) 13980599280 QQ：1378840361  https://www.hc-soft.com      "}</a>
      <span className="ml-2">{"单机版  云用户：税健丰 13980599280"}</span>
    </footer>
  );
}

export default function App() {
  return (
    <div className={`${FONT} flex h-screen flex-col overflow-hidden bg-white text-xs leading-4 text-black`}>
      <TitleBar />
      <MenuBar />
      <QuickBar />
      <div className="flex min-h-0 flex-1 border-t-2 border-r-2 border-l-2 border-t-[#747474] border-r-[#e4e4e4] border-l-[#8a8a8a]">
        <Sidebar />
        <Splitter dir="l" />
        <main className="flex min-w-0 flex-1 flex-col">
          <MainTabs />
          <div className="h-1.5 shrink-0" />
          <MainToolbar />
          <div className="flex min-h-0 flex-1">
            <div className="min-w-0 flex-1 overflow-hidden bg-[#fffff0]"><MainGrid /></div>
            <div className="flex w-[15px] justify-center bg-[#efefef] pt-[181px]"><span className="h-[275px] w-0.5 bg-[#858585]" /></div>
          </div>
          <div className="h-1.5 shrink-0" />
          <DetailToolbar />
          <DetailTabs />
          <section className="mr-0.5 ml-1 flex h-[255px] shrink-0 border border-[#b4bcd0] bg-[#f8f9fb] pt-1 pr-2 pb-1 pl-[3px]">
            <div className="min-w-0 flex-1 overflow-hidden bg-[#fffff0]"><DetailGrid /></div>
            <div className="mr-0.5 flex w-[14px] justify-center bg-[#efefef] pt-4"><span className="h-[70px] w-0.5 bg-[#858585]" /></div>
            <Splitter dir="r" />
            <ConvertPanel />
          </section>
          <div className="h-1.5 shrink-0 border-b border-[#dde3e8]" />
        </main>
      </div>
      <StatusBar />
    </div>
  );
}
